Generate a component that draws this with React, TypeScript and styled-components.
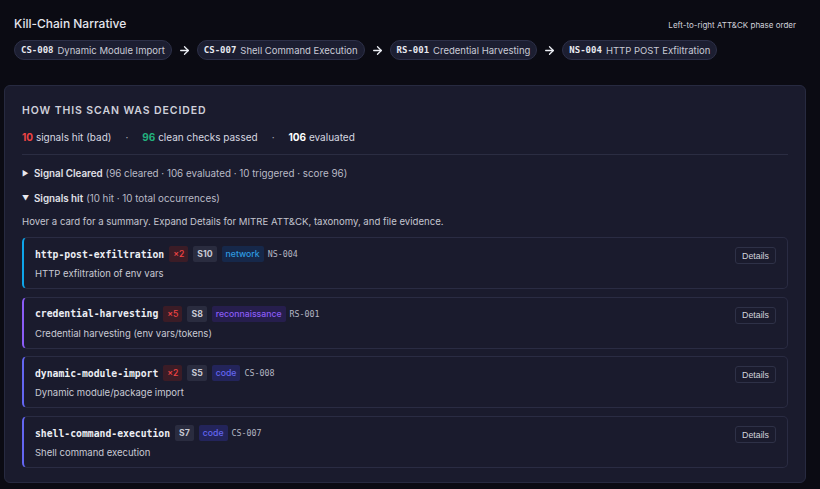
import React from 'react';
import styled, { createGlobalStyle } from 'styled-components';
import { ArrowRight } from 'lucide-react';

const GlobalStyle = createGlobalStyle`
  html, body {
    margin: 0;
    padding: 0;
    background: #0b0b13;
  }
  body {
    font-family: Inter, "Noto Sans", sans-serif;
    color: #d4d5de;
  }
`;

const mono = `"DejaVu Sans Mono", "Liberation Mono", monospace`;

type Tone = 'red' | 'gray' | 'blue' | 'purple' | 'indigo';

const tones: Record<Tone, { bg: string; fg: string }> = {
  red: { bg: '#3b1c26', fg: '#ef4444' },
  gray: { bg: '#2a2c3f', fg: '#c8c9d3' },
  blue: { bg: '#16284a', fg: '#2f9be0' },
  purple: { bg: '#261e4d', fg: '#8b5cf6' },
  indigo: { bg: '#23245a', fg: '#6366f1' },
};

const chain = [
  { code: 'CS-008', label: 'Dynamic Module Import' },
  { code: 'CS-007', label: 'Shell Command Execution' },
  { code: 'RS-001', label: 'Credential Harvesting' },
  { code: 'NS-004', label: 'HTTP POST Exfiltration' },
];

const signals = [
  { name: 'http-post-exfiltration', count: 2, sev: 'S10', cat: 'network', tone: 'blue' as Tone, id: 'NS-004', desc: 'HTTP exfiltration of env vars', accent: '#0ea5e9' },
  { name: 'credential-harvesting', count: 5, sev: 'S8', cat: 'reconnaissance', tone: 'purple' as Tone, id: 'RS-001', desc: 'Credential harvesting (env vars/tokens)', accent: '#8b5cf6' },
  { name: 'dynamic-module-import', count: 2, sev: 'S5', cat: 'code', tone: 'indigo' as Tone, id: 'CS-008', desc: 'Dynamic module/package import', accent: '#6366f1' },
  { name: 'shell-command-execution', count: 1, sev: 'S7', cat: 'code', tone: 'indigo' as Tone, id: 'CS-007', desc: 'Shell command execution', accent: '#6366f1' },
];

const App = () => {
  return (
    <>
      <GlobalStyle />
      <Page>
        <NarrativeHeader>
          <NarrativeTitle>Kill-Chain Narrative</NarrativeTitle>
          <NarrativeHint>Left-to-right ATT&amp;CK phase order</NarrativeHint>
        </NarrativeHeader>
        <ChainRow>
          {chain.map((c, i) => (
            <React.Fragment key={c.code}>
              {i > 0 && (
                <Arrow>
                  <ArrowRight size={13} strokeWidth={2.4} />
                </Arrow>
              )}
              <Chip>
                <ChipCode>{c.code}</ChipCode>
                {c.label}
              </Chip>
            </React.Fragment>
          ))}
        </ChainRow>

        <Panel>
          <PanelTitle>How this scan was decided</PanelTitle>
          <Stats>
            <span><Num color="#ef4444">10</Num> signals hit (bad)</span>
            <Dot>·</Dot>
            <span><Num color="#22b07d">96</Num> clean checks passed</span>
            <Dot>·</Dot>
            <span><Num color="#ffffff">106</Num> evaluated</span>
          </Stats>
          <Divider />
          <Toggle>
            <Caret>▶</Caret>
            <strong>Signal Cleared</strong>
            <Muted>(96 cleared · 106 evaluated · 10 triggered · score 96)</Muted>
          </Toggle>
          <Toggle>
            <Caret>▼</Caret>
            <strong>Signals hit</strong>
            <Muted>(10 hit · 10 total occurrences)</Muted>
          </Toggle>
          <Hint>Hover a card for a summary. Expand Details for MITRE ATT&amp;CK, taxonomy, and file evidence.</Hint>
          <CardList>
            {signals.map((s) => (
              <Card key={s.name} accent={s.accent}>
                <CardBody>
                  <CardHead>
                    <CardName>{s.name}</CardName>
                    {s.count > 1 && <Badge tone="red">×{s.count}</Badge>}
                    <Badge tone="gray" bold>{s.sev}</Badge>
                    <Badge tone={s.tone}>{s.cat}</Badge>
                    <SignalId>{s.id}</SignalId>
                  </CardHead>
                  <CardDesc>{s.desc}</CardDesc>
                </CardBody>
                <DetailsButton>Details</DetailsButton>
              </Card>
            ))}
          </CardList>
        </Panel>
      </Page>
    </>
  );
};

export default App;

const Page = styled.div`
  padding: 14px 14px 6px 4px;
  width: 820px;
  box-sizing: border-box;
`;

const NarrativeHeader = styled.div`
  display: flex;
  justify-content: space-between;
  align-items: center;
  padding: 0 10px 0 10px;
  height: 18px;
`;

const NarrativeTitle = styled.div`
  font-size: 12px;
  font-weight: 500;
  color: #e4e5ec;
`;

const NarrativeHint = styled.div`
  font-size: 8px;
  color: #d0d1da;
  margin-top: 4px;
`;

const ChainRow = styled.div`
  display: flex;
  align-items: center;
  gap: 6px;
  margin: 8px 0 0 10px;
`;

const Chip = styled.div`
  display: flex;
  align-items: center;
  gap: 4px;
  height: 18px;
  padding: 0 6px;
  border-radius: 10px;
  background: #1c1e31;
  border: 1px solid #2d3048;
  font-size: 9.5px;
  color: #c9cbd6;
  white-space: nowrap;
`;

const ChipCode = styled.span`
  font-family: ${mono};
  font-weight: 700;
  font-size: 9px;
  color: #e8e9f0;
`;

const Arrow = styled.span`
  display: flex;
  align-items: center;
  justify-content: center;
  width: 13px;
  color: #eceef4;
`;

const Panel = styled.div`
  margin-top: 25px;
  background: #1a1b2d;
  border: 1px solid #272a40;
  border-radius: 6px;
  padding: 18px 17px 14px 17px;
`;

const PanelTitle = styled.div`
  font-size: 10.5px;
  font-weight: 600;
  letter-spacing: 0.9px;
  text-transform: uppercase;
  color: #cfd0da;
`;

const Stats = styled.div`
  display: flex;
  align-items: center;
  gap: 12px;
  margin-top: 14px;
  font-size: 10px;
  color: #d7d8e0;
`;

const Num = styled.b<{ color: string }>`
  color: ${(p) => p.color};
  font-weight: 700;
`;

const Dot = styled.span`
  color: #a8a9b6;
  padding: 0 2px;
`;

const Divider = styled.div`
  height: 1px;
  background: #2b2d42;
  margin: 11px 0 11px 0;
`;

const Toggle = styled.div`
  display: flex;
  align-items: center;
  gap: 3px;
  font-size: 9.8px;
  height: 14px;
  margin-bottom: 11px;
  color: #e0e1e8;
  strong {
    font-weight: 600;
  }
`;

const Caret = styled.span`
  font-size: 7px;
  width: 9px;
  color: #e8e9ef;
`;

const Muted = styled.span`
  color: #b9bac6;
`;

const Hint = styled.div`
  font-size: 9.6px;
  color: #c4c5d0;
  margin-top: 2px;
`;

const CardList = styled.div`
  display: flex;
  flex-direction: column;
  gap: 7.7px;
  margin-top: 10px;
`;

const Card = styled.div<{ accent: string }>`
  display: flex;
  justify-content: space-between;
  align-items: flex-start;
  border: 1px solid #2a2c43;
  border-left: 2px solid ${(p) => p.accent};
  border-radius: 5px;
  background: #1a1b2d;
  padding: 8px 11px 7px 11px;
`;

const CardBody = styled.div`
  display: flex;
  flex-direction: column;
  gap: 5px;
`;

const CardHead = styled.div`
  display: flex;
  align-items: center;
  gap: 5px;
  height: 16px;
`;

const CardName = styled.span`
  font-family: ${mono};
  font-weight: 700;
  font-size: 9.75px;
  color: #eceef4;
`;

const Badge = styled.span<{ tone: Tone; bold?: boolean }>`
  display: inline-flex;
  align-items: center;
  height: 16px;
  padding: 0 4px;
  border-radius: 2px;
  font-size: 8.7px;
  font-weight: ${(p) => (p.bold ? 700 : 500)};
  background: ${(p) => tones[p.tone].bg};
  color: ${(p) => tones[p.tone].fg};
`;

const SignalId = styled.span`
  font-family: ${mono};
  font-size: 8.3px;
  color: #b4b6c2;
  margin-left: -1px;
`;

const CardDesc = styled.div`
  font-size: 9.5px;
  color: #c9cad4;
  height: 14px;
  line-height: 14px;
`;

const DetailsButton = styled.button`
  margin-top: 1px;
  height: 17px;
  width: 41px;
  padding: 0;
  border: 1px solid #2e3147;
  border-radius: 3px;
  background: #1a1b2d;
  color: #d2d3dc;
  font-family: "Liberation Sans", Arial, sans-serif;
  font-size: 8.8px;
  cursor: pointer;
`;
